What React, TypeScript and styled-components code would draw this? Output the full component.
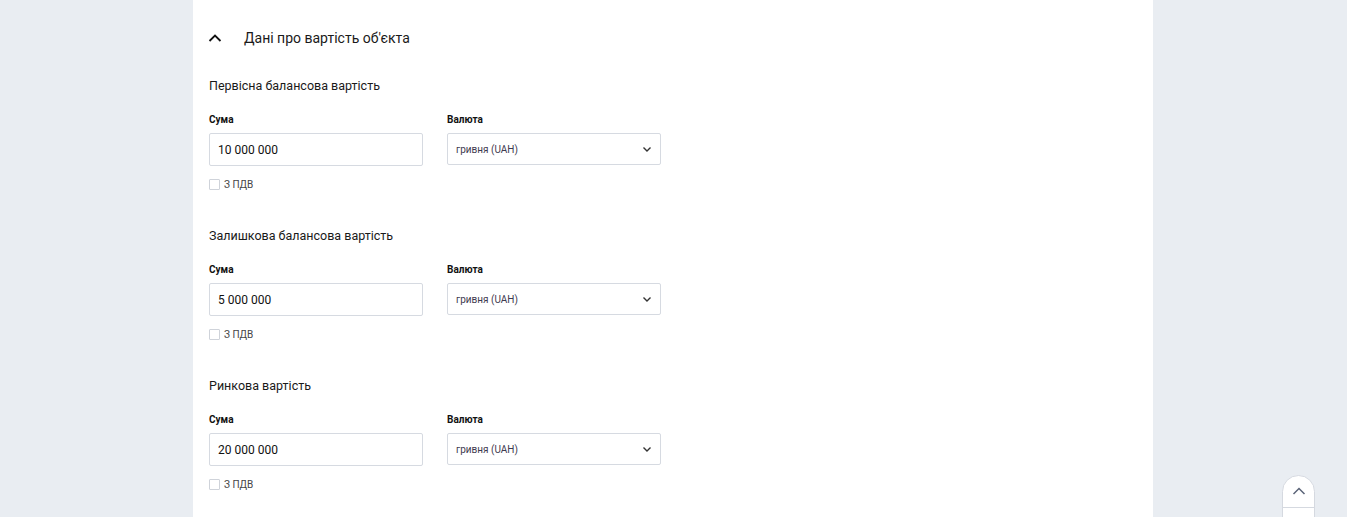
import React from 'react';
import styled, { createGlobalStyle } from 'styled-components';

const GlobalStyle = createGlobalStyle`
    html, body {
        margin: 0;
        padding: 0;
        background: #e9edf2;
        font-family: Roboto, "Liberation Sans", Arial, sans-serif;
        color: #1e1e1e;
        overflow: hidden;
    }
`;

interface Cost {
    title: string;
    amount: string;
}

const costs: Cost[] = [
    { title: 'Первісна балансова вартість', amount: '10 000 000' },
    { title: 'Залишкова балансова вартість', amount: '5 000 000' },
    { title: 'Ринкова вартість', amount: '20 000 000' },
];

const Page = styled.div`
    display: flex;
    min-height: 100vh;
    padding-left: 193px;
`;

const Panel = styled.main`
    width: 960px;
    background: #ffffff;
    padding: 28px 16px 40px;
    box-sizing: border-box;
    min-height: 600px;
`;

const Header = styled.div`
    display: flex;
    align-items: center;
    height: 20px;
    gap: 22px;
    margin: 0 0 30px -1px;
`;

const HeaderTitle = styled.h2`
    margin: 0;
    font-size: 14px;
    font-weight: 400;
    line-height: 20px;
    color: #1a1a1a;
`;

const Section = styled.section`
    display: flex;
    flex-direction: column;
    margin-bottom: 38px;
`;

const SectionTitle = styled.h3`
    margin: 0 0 20px;
    font-size: 12.5px;
    font-weight: 400;
    line-height: 16px;
    color: #1a1a1a;
`;

const Fields = styled.div`
    display: flex;
    gap: 24px;
`;

const Field = styled.div`
    display: flex;
    flex-direction: column;
    width: 214px;
`;

const Label = styled.label`
    font-size: 10px;
    font-weight: 700;
    line-height: 12px;
    margin-bottom: 7px;
    color: #111;
`;

const Input = styled.div`
    box-sizing: border-box;
    height: 33px;
    border: 1px solid #d6dae1;
    border-radius: 2px;
    display: flex;
    align-items: center;
    padding: 0 8px;
    font-size: 12px;
    color: #111;
`;

const Select = styled(Input)`
    height: 32px;
    justify-content: space-between;
    font-size: 10px;
    color: #3e3a4f;
`;

const CheckRow = styled.div`
    display: flex;
    align-items: center;
    gap: 4px;
    height: 12px;
    margin-top: 12px;
    font-size: 10px;
    color: #444;
`;

const Box = styled.span`
    box-sizing: border-box;
    width: 11px;
    height: 11px;
    border: 1px solid #cfd3da;
    border-radius: 1px;
    background: #fff;
`;

const ScrollTop = styled.div`
    position: fixed;
    top: 475px;
    right: 32px;
    width: 33px;
    height: 64px;
    box-sizing: border-box;
    background: #fff;
    border: 1px solid #d5d9e0;
    border-radius: 17px 17px 0 0;
    display: flex;
    flex-direction: column;
`;

const ScrollHalf = styled.div`
    height: 31px;
    display: flex;
    align-items: center;
    justify-content: center;
    & + & {
        border-top: 1px solid #d5d9e0;
    }
`;

const ChevronUp = ({ size, color, width }: { size: number; color: string; width: number }) => (
    <svg width={size} height={size} viewBox="0 0 14 14" fill="none">
        <path d="M1.5 10L7 4.5L12.5 10" stroke={color} strokeWidth={width} />
    </svg>
);

const ChevronDown = () => (
    <svg width="10" height="10" viewBox="0 0 10 10" fill="none">
        <path d="M1.5 3.5L5 7L8.5 3.5" stroke="#333" strokeWidth="1.4" />
    </svg>
);

export default function App() {
    return (
        <>
            <GlobalStyle />
            <Page>
                <Panel>
                    <Header>
                        <ChevronUp size={14} color="#111" width={1.8} />
                        <HeaderTitle>Дані про вартість об'єкта</HeaderTitle>
                    </Header>
                    {costs.map(c => (
                        <Section key={c.title}>
                            <SectionTitle>{c.title}</SectionTitle>
                            <Fields>
                                <Field>
                                    <Label>Сума</Label>
                                    <Input>{c.amount}</Input>
                                    <CheckRow>
                                        <Box />
                                        З ПДВ
                                    </CheckRow>
                                </Field>
                                <Field>
                                    <Label>Валюта</Label>
                                    <Select>
                                        гривня (UAH)
                                        <ChevronDown />
                                    </Select>
                                </Field>
                            </Fields>
                        </Section>
                    ))}
                </Panel>
            </Page>
            <ScrollTop>
                <ScrollHalf>
                    <ChevronUp size={14} color="#5b6478" width={1.5} />
                </ScrollHalf>
                <ScrollHalf />
            </ScrollTop>
        </>
    );
}
